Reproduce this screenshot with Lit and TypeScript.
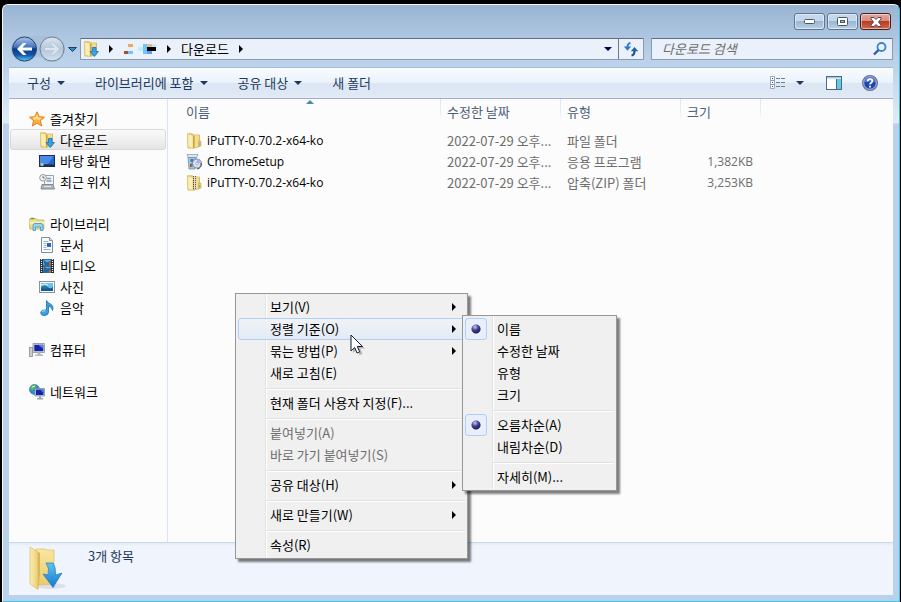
import { LitElement, html, css, svg, nothing, TemplateResult } from "lit";
import { customElement, property } from "lit/decorators.js";
import { classMap } from "lit/directives/class-map.js";

const folderBody = svg`
  <path d="M1.500 .8h5l1 1.200h6v11.500l-5 1.500H2z" fill="#f0d988" stroke="#cfae4e" stroke-width=".8"/>
  <path d="M1.500 1l5.500 1.500v13L2 14z" fill="#fbeeb4" stroke="#d8bc66" stroke-width=".5"/>
  <path d="M7 2.500v13l1.800-1.300V3z" fill="#c9a548"/>
  <path d="M8.800 2.500H13v10.800l-4.200 1.200z" fill="#f3dd8c"/>`;

const icons: Record<string, TemplateResult> = {
  folder: svg`${folderBody}<path d="M12.500 8h2.500v5l-2.500 1z" fill="#e6c868" stroke="#c9a548" stroke-width=".5"/><path d="M13.700 10v2.500" stroke="#58b4d8"/>`,
  download: svg`${folderBody}
    <path d="M9.500 6.500h3.500v4h2.500l-4.200 5-4.300-5h2.500z" fill="#38a4e6" stroke="#1670b8" stroke-width=".8"/>`,
  zip: svg`${folderBody}<path d="M12.500 8h2.500v5l-2.500 1z" fill="#e6c868" stroke="#c9a548" stroke-width=".5"/><path d="M13.700 10v2.500" stroke="#58b4d8"/><path d="M8.500 1v13" stroke="#555" stroke-width="3" stroke-dasharray="1 1"/><path d="M8.500 1v13" stroke="#ddd" stroke-width="1"/>`,
  star: svg`<path d="M8 .8l2.200 4.900 5.200.5-4 3.500 1.300 5.300L8 12.200 3.300 15l1.300-5.300-4-3.500 5.200-.5z" fill="#ffb13c" stroke="#e2701a" stroke-width=".9"/><path d="M8 3l1.400 3.500 3.300.4L10 9l-2-1-4 1 1-2.300-1.700-.2 3.200-.4z" fill="#ffe38a"/>`,
  desktop: svg`<rect x=".5" y="2.500" width="15" height="11" fill="#2a63c8" stroke="#1c2f58"/><path d="M1 3h14L9 11H1z" fill="#4b8ae6"/><path d="M1 11.500h14v1.500H1z" fill="#1d2b48"/><circle cx="3" cy="11.500" r="1.800" fill="#5fd0e8"/><path d="M3 10v3M1.500 11.500h3" stroke="#f3c23c" stroke-width=".6"/>`,
  recent: svg`<path d="M5.500 1.500h9v9h-9z" fill="#f2f4f6" stroke="#9aa2aa"/><path d="M8 4.500h4M7.500 7h5" stroke="#7aa0bc" stroke-width="1.500"/><path d="M3 10.500h11l1.500 4.500H2z" fill="#aeb4ba" stroke="#858b92"/><path d="M5 12.500h7" stroke="#e6e8ea"/><circle cx="4" cy="3.800" r="3.300" fill="#f3f6f8" stroke="#8f989f"/><path d="M4 2v2h1.700" fill="none" stroke="#666"/>`,
  library: svg`<path d="M.8 2.500h6l1 1.500h7v9H.8z" fill="#f1dc8a" stroke="#cdaa48" stroke-width=".8"/><path d="M2 2.500h3" stroke="#3fae4a" stroke-width="1.500"/><path d="M1 5.500h14v3H1z" fill="#f9edb8"/><path d="M4 14.500v-5q0-2 2-2h6q2 0 2 2v5h-2.500v-3.500h-5v3.500z" fill="#8fd6f0" stroke="#3d93bf" stroke-width=".8"/>`,
  doc: svg`<path d="M2.500.5h8l3 3v12h-11z" fill="#fff" stroke="#7f8ea0"/><path d="M10.500.5v3h3" fill="#dce4ec" stroke="#7f8ea0"/><path d="M4.500 4.500h5M4.500 6.500h3M4.500 8.500h3M4.500 10.500h3M4.500 12.500h7" stroke="#94b4d8"/><rect x="8" y="6" width="4" height="4" fill="#2e66b4"/>`,
  video: svg`<rect x="1" y="1" width="14" height="14" fill="#252f3a"/><path d="M2.500 1v14M13.500 1v14" stroke="#eef" stroke-width="1.200" stroke-dasharray="1 1"/><path d="M4 1.500h8v6H4zM4 8.500h8v6H4z" fill="#5aaee0"/><path d="M4 1.500l4 3 4-2v3L9 7.500H6zM5 8.500l3 2 4-1v3l-3 2H4z" fill="#2b6598"/><path d="M10 4h2v3.500h-2zM10 12h2v2.500h-2z" fill="#b8643c"/>`,
  picture: svg`<rect x=".5" y="2.500" width="15" height="11" fill="#fff" stroke="#8a949e"/><path d="M2 4h12v8H2z" fill="#6ec0ee"/><path d="M2 8q4-3 7 0t5-1v5H2z" fill="#247c94"/><path d="M2 9.500h12V12H2z" fill="#145a9a"/><path d="M2 6q4-2 7 0" fill="none" stroke="#e8f7ff"/>`,
  music: svg`<path d="M7.500 .5q1.500 2.500 4 3.500 3.500 2 2 6.500-.5-3.500-4-4.500v6q0 3-3.500 3.500-4.500.3-4.200-3.200.7-2.800 5.700-2.300z" fill="#3da0de" stroke="#1d6fae" stroke-width=".8"/><path d="M3 12q1-1.500 3.500-1.300" stroke="#b7e2fa" fill="none"/>`,
  computer: svg`<rect x=".5" y="5.500" width="3" height="9" fill="#c9ced3" stroke="#868d94" stroke-width=".8"/><path d="M4 1.500h11.500v9H4z" fill="#d6dade" stroke="#8b9299" stroke-width=".8"/><path d="M5.300 2.800h9v6.400h-9z" fill="#1622a8"/><path d="M9 2.800h5.300v4z" fill="#5d83ea"/><path d="M8.500 10.500h3v2h2.500v1.500H6v-1.500h2.500z" fill="#b3b9bf"/>`,
  network: svg`<circle cx="5.500" cy="5.500" r="5" fill="#2c8ed6" stroke="#226a9e" stroke-width=".6"/><path d="M2 2.500Q5 0 7 1.500L6 4 3.500 6 1 5zM6 7l3-1 1 2-3 2z" fill="#5fc549"/><path d="M3 3l3-1" stroke="#e6fbe0"/><path d="M6 4.500h9.500v7.500H6z" fill="#cdd3da" stroke="#7b838c" stroke-width=".7"/><path d="M7 5.500h7.500V11H7z" fill="#1424ac"/><path d="M11 5.500h3.500v3.500z" fill="#5078e2"/><path d="M10 12h2v2h2v1.500H8V14h2z" fill="#9aa3ac"/>`,
  setup: svg`<path d="M1 .5h11l-1.500 3H2z" fill="#dfe6ec" stroke="#93a0ab" stroke-width=".8"/><path d="M2 3.500h8l-1 11.500H3z" fill="#9cc6e2" stroke="#6f93ac" stroke-width=".8"/><path d="M4.500 5h3v3h-3z" fill="#2f7fd0"/><path d="M5 9h3v3.500H5z" fill="#4caf3f"/><path d="M4 10h1.500v3H4z" fill="#c8382e"/><circle cx="11" cy="9.500" r="4.500" fill="#dcdff2" stroke="#7d82a0"/><path d="M11 9.500V5.500q3 0 4 3z" fill="#a8b0ea"/><circle cx="11" cy="9.500" r="1.300" fill="#fff" stroke="#7d82a0" stroke-width=".6"/><path d="M11 15q5-1 4-6" stroke="#44485a" fill="none"/>`,
  views: svg`<path d="M.5 1.500h4v4h-4zM.5 5.500h4v4h-4zM.5 9.500h4v4h-4z" fill="#fff" stroke="#8296b0" stroke-width=".8"/><path d="M2 3h1v1H2zM2 11h1v1H2z" fill="#345"/><path d="M2 7h1v1H2z" fill="#d22"/><path d="M6 3.500h4M11 3.500h4M6 7.500h4M11 7.500h4M6 11.500h4M11 11.500h4" stroke="#6a7f9a"/>`,
  pane: svg`<rect x=".5" y="1.500" width="15" height="13" fill="#fff" stroke="#4a6a88"/><path d="M1 2h14v1.500H1z" fill="#a9c8de"/><path d="M10.500 4v10.500" stroke="#4a6a88"/><path d="M11 4h4v10h-4z" fill="#63cbe0"/>`,
  help: svg`<circle cx="8" cy="8" r="7.400" fill="#1f45b0" stroke="#6c7690" stroke-width="1.200"/><circle cx="8" cy="8" r="6.300" fill="none" stroke="#dce6fa" stroke-width=".8"/><path d="M3 7a5 4.500 0 0 1 10 0q-5-1-10 0z" fill="#6688dc"/><path d="M5.700 6.300q0-2.300 2.300-2.300t2.300 2q0 1.200-1.300 1.900-1 .6-1 1.600" fill="none" stroke="#fff" stroke-width="1.700"/><path d="M7.100 10.800h1.800v1.700H7.100z" fill="#fff"/>`,
  search: svg`<circle cx="9.500" cy="6" r="4" fill="#e8f4fd" stroke="#3a85c8" stroke-width="1.800"/><path d="M6.500 9L2 13.500" stroke="#2a5fae" stroke-width="2.400"/>`,
  refresh: svg`<path d="M7.500 2q-3 .5-3 4.500" fill="none" stroke="#3a86cc" stroke-width="2.200"/><path d="M.8 5.500h7.400L4.500 9.800z" fill="#2f7cc6"/><path d="M8.500 14.500q3-.5 3-4.500" fill="none" stroke="#1f5596" stroke-width="2.200"/><path d="M7.800 10.300h7.400l-3.700-4.300z" fill="#24619f"/>`,
};

const icon = (name: string) =>
  html`<svg class="icon" viewBox="0 0 16 16" aria-hidden="true">${icons[name]}</svg>`;
const caret = html`<svg class="caret" viewBox="0 0 8 4" aria-hidden="true"><path d="M0 0h8L4 4z" fill="currentColor"/></svg>`;
const chevron = html`<svg class="chevron" viewBox="0 0 4 8" aria-hidden="true"><path d="M0 0v8l4-4z" fill="currentColor"/></svg>`;

const shared = css`
  * { box-sizing: border-box; }
  :host {
    box-sizing: border-box;
    font: 13px/20px "Noto Sans CJK KR", sans-serif;
  }
  button, input {
    font: inherit;
    color: inherit;
    margin: 0;
    padding: 0;
    border: 0;
    background: none;
  }
  svg { display: block; flex: none; }
  .icon { width: 16px; height: 16px; }
  .caret { width: 8px; height: 4px; }
  .chevron { width: 4px; height: 8px; }
`;

interface Entry {
  label?: string;
  disabled?: boolean;
  active?: boolean;
  arrow?: boolean;
  group?: string;
  checked?: boolean;
  children?: Entry[];
}

@customElement("popup-menu")
export class PopupMenu extends LitElement {
  @property({ attribute: false }) entries: Entry[] = [];

  static styles = [
    shared,
    css`
      :host {
        display: block;
        padding: 2px;
        border: 1px solid #979797;
        color: #000;
        background: linear-gradient(90deg, #f0f0f0 29px, #e2e3e3 29px 30px, #fff 30px 31px, #f0f0f0 31px) padding-box;
        box-shadow: 3px 3px 2px rgba(0, 0, 0, 0.5);
      }
      .row { position: relative; }
      .item {
        display: flex;
        align-items: center;
        width: 100%;
        height: 22px;
        padding: 0 8px 0 31px;
        border: 1px solid transparent;
        border-radius: 3px;
        text-align: left;
        white-space: nowrap;
      }
      .item span { flex: 1; }
      .item.active {
        border-color: #aecff7;
        background: linear-gradient(rgba(240, 244, 250, 0.8), rgba(224, 233, 245, 0.8));
      }
      .item:disabled { color: #6d6d6d; }
      .option { padding: 0 8px 0 0; border: 0; gap: 10px; }
      .radio {
        appearance: none;
        width: 22px;
        height: 22px;
        border-radius: 3px;
      }
      .radio:checked {
        border: 1px solid #aecff7;
        background:
          radial-gradient(circle at 10px 10px, transparent 4px, #e9eff8 5px),
          radial-gradient(circle at 9px 8px, #d0d0f4 0, #4a4a9c 3px, #1c1c60 6px);
      }
      .separator {
        height: 2px;
        margin: 4px 0 2px 28px;
        border: 0;
        border-top: 1px solid #e0e0e0;
        background: #fff;
      }
      .submenu {
        position: absolute;
        top: -3px;
        left: calc(100% - 3px);
        width: 155px;
      }
    `,
  ];

  private entry(e: Entry) {
    if (!e.label) return html`<hr class="separator" />`;
    if (e.group)
      return html`<label class="item option">
        <input class="radio" type="radio" name=${e.group} .checked=${!!e.checked} />
        <span>${e.label}</span>
      </label>`;
    return html`<div class="row">
      <button type="button" class=${classMap({ item: true, active: !!e.active })} ?disabled=${e.disabled}>
        <span>${e.label}</span>${e.arrow ? chevron : nothing}
      </button>
      ${e.children ? html`<popup-menu class="submenu" .entries=${e.children}></popup-menu>` : nothing}
    </div>`;
  }

  render() {
    return this.entries.map((e) => this.entry(e));
  }
}

const sortEntries: Entry[] = [
  { label: "이름", group: "field", checked: true },
  { label: "수정한 날짜", group: "field" },
  { label: "유형", group: "field" },
  { label: "크기", group: "field" },
  {},
  { label: "오름차순(A)", group: "order", checked: true },
  { label: "내림차순(D)", group: "order" },
  {},
  { label: "자세히(M)..." },
];

const menuEntries: Entry[] = [
  { label: "보기(V)", arrow: true },
  { label: "정렬 기준(O)", arrow: true, active: true, children: sortEntries },
  { label: "묶는 방법(P)", arrow: true },
  { label: "새로 고침(E)" },
  {},
  { label: "현재 폴더 사용자 지정(F)..." },
  {},
  { label: "붙여넣기(A)", disabled: true },
  { label: "바로 가기 붙여넣기(S)", disabled: true },
  {},
  { label: "공유 대상(H)", arrow: true },
  {},
  { label: "새로 만들기(W)", arrow: true },
  {},
  { label: "속성(R)" },
];

interface Place {
  name: string;
  icon: string;
  selected?: boolean;
}

const places: (Place & { items: Place[] })[] = [
  { name: "즐겨찾기", icon: "star", items: [
    { name: "다운로드", icon: "download", selected: true },
    { name: "바탕 화면", icon: "desktop" },
    { name: "최근 위치", icon: "recent" },
  ] },
  { name: "라이브러리", icon: "library", items: [
    { name: "문서", icon: "doc" },
    { name: "비디오", icon: "video" },
    { name: "사진", icon: "picture" },
    { name: "음악", icon: "music" },
  ] },
  { name: "컴퓨터", icon: "computer", items: [] },
  { name: "네트워크", icon: "network", items: [] },
];

const files = [
  { name: "iPuTTY-0.70.2-x64-ko", icon: "folder", type: "파일 폴더", size: "" },
  { name: "ChromeSetup", icon: "setup", type: "응용 프로그램", size: "1,382KB" },
  { name: "iPuTTY-0.70.2-x64-ko", icon: "zip", type: "압축(ZIP) 폴더", size: "3,253KB" },
];

@customElement("app-root")
export class AppRoot extends LitElement {
  static styles = [
    shared,
    css`
      :host {
        display: flex;
        position: relative;
        min-height: 100vh;
        padding: 4px 1px 0 2px;
        background: #000;
        overflow: hidden;
      }
      .window {
        flex: 1;
        display: flex;
        flex-direction: column;
        min-width: 0;
        padding: 0 6px 6px;
        border: 1px solid #f4f9fd;
        border-right-color: #3cc4de;
        border-bottom-color: #3cc4de;
        border-radius: 6px 6px 0 0;
        background: linear-gradient(#98b4d2, #a6bfdb 20px, #b9d0e9 52px, #bcd3eb 62px, #e0ebf7 118px, #b9d1ea 119px);
      }
      .caption {
        display: flex;
        justify-content: flex-end;
        gap: 2px;
        padding: 8px 2px 8px 0;
      }
      .cap {
        display: grid;
        place-items: center;
        width: 31px;
        height: 17px;
        border: 1px solid #5d7590;
        border-radius: 3px;
        box-shadow: inset 0 0 0 1px rgba(255, 255, 255, 0.5);
        background: linear-gradient(#c5d7ea 50%, #9db7d3 50%, #b8d0e8);
      }
      .cap.close {
        border-color: #4e1820;
        background: linear-gradient(#e2a79c 0, #d68a7c 50%, #b83a22 50%, #cf6a4c);
      }
      .navbar {
        display: flex;
        align-items: center;
        height: 22px;
        margin-bottom: 7px;
      }
      .travel { display: flex; align-items: center; margin: -3px 2px -3px 0; }
      .travel .arrows { width: 57px; height: 28px; }
      .recent { width: 12px; display: grid; place-items: center; }
      .address, .searchbox {
        display: flex;
        align-items: center;
        height: 22px;
        min-width: 0;
        border: 1px solid #8b9cad;
        border-top-color: #5f6e7d;
        border-radius: 1px;
        background: #eaf1fa;
        color: #000;
      }
      .address { flex: 1; margin-right: 7px; }
      .crumbs { flex: 1; display: flex; align-items: center; gap: 10px; padding-left: 2px; }
      .crumbs a { color: inherit; text-decoration: none; }
      .redacted { width: 34px; height: 12px; }
      .drop { width: 20px; height: 20px; display: grid; place-items: center; color: #00004e; }
      .reload {
        width: 25px;
        height: 20px;
        border-left: 1px solid #6d7b8a;
        display: grid;
        place-items: center;
      }
      .searchbox { width: 242px; padding: 0 4px 0 10px; }
      .searchbox input { flex: 1; min-width: 0; height: 20px; outline: 0; }
      .searchbox input::placeholder { color: #6d6d6d; font-style: italic; opacity: 1; }
      .toolbar {
        display: flex;
        align-items: center;
        height: 32px;
        padding: 0 15px 0 3px;
        border-top: 1px solid #a3bdd8;
        border-bottom: 1px solid #a0afc6;
        background: linear-gradient(#fafdff, #e8f1fb 50%, #dce6f4 50%, #dfe8f5 90%, #e6edf8);
        color: #1e395b;
      }
      .tool { display: flex; align-items: center; gap: 6px; padding: 0 15px; white-space: nowrap; }
      .tools { display: flex; align-items: center; gap: 20px; margin-left: auto; }
      .tools .tool { padding: 0; gap: 10px; }
      .tools .tool:first-child { margin-right: 2px; }
      .body { flex: 1; display: flex; background: #fcfcfc; min-height: 0; }
      .sidebar { width: 159px; padding: 9px 1px 0; border-right: 1px solid #d6e5f5; }
      .group { margin: 0 0 21px; padding: 0; list-style: none; }
      .place {
        display: flex;
        align-items: center;
        gap: 5px;
        height: 21px;
        padding-left: 18px;
        border: 1px solid transparent;
        border-radius: 3px;
        color: #000;
        text-decoration: none;
      }
      .place.child { padding-left: 28px; }
      .place.selected { border-color: #d9d9d9; background: linear-gradient(#fafafa, #e5e5e5); }
      .main { flex: 1; min-width: 0; }
      .files { table-layout: fixed; width: 593px; border-collapse: collapse; color: #6d6d6d; }
      .files th, .files td {
        padding: 0 7px 0 6px;
        font-weight: 400;
        text-align: left;
        white-space: nowrap;
        overflow: hidden;
      }
      .files th {
        position: relative;
        height: 26px;
        color: #4c607a;
        background: linear-gradient(#d6e5f5, #e3edf8 12px, #fcfcfc 22px) right top / 1px 22px no-repeat;
      }
      .files td { height: 21px; }
      .files th:first-child, .files td:first-child { padding-left: 18px; }
      .files .spacer td { height: 5px; }
      .sort { position: absolute; left: 138px; top: 1px; width: 8px; height: 4px; color: #4a8aae; }
      .files .size { text-align: right; padding-right: 8px; }
      .latin { font: 12px/20px "Open Sans", "Noto Sans CJK KR", sans-serif; }
      .file { display: flex; align-items: center; gap: 5px; color: #000; }
      .c-name { width: 273px; }
      .c-wide { width: 120px; }
      .c-size { width: 80px; }
      .details {
        display: flex;
        gap: 21px;
        height: 53px;
        padding: 3px 18px 0;
        border-top: 1px solid #c9d8ea;
        background: linear-gradient(#e2eaf5, #f0f4fc 3px);
        color: #1e395b;
      }
      .details p { margin: 0; }
      .big { width: 40px; height: 46px; }
      .context { position: absolute; left: 235px; top: 293px; width: 233px; }
      .cursor { position: absolute; left: 350px; top: 334px; width: 16px; height: 22px; }
    `,
  ];

  private travel() {
    return html`<svg class="arrows" viewBox="0 0 57 28" aria-hidden="true">
      <defs>
        <linearGradient id="b" x2="0" y2="1">
          <stop offset="0" stop-color="#a9c6ea" /><stop offset=".42" stop-color="#4674bc" />
          <stop offset=".5" stop-color="#0c3a8c" /><stop offset=".75" stop-color="#1254aa" /><stop offset="1" stop-color="#5cd0fa" />
        </linearGradient>
        <linearGradient id="f" x2="0" y2="1">
          <stop offset="0" stop-color="#dce6f0" /><stop offset=".5" stop-color="#b4c6da" /><stop offset="1" stop-color="#d4e2f0" />
        </linearGradient>
      </defs>
      <path d="M15 1h28a13 13 0 0 1 0 26q-7 0-10-4-4-3-8 0-3 4-10 4a13 13 0 0 1 0-26z" fill="#a5bdd6" opacity=".8" />
      <circle cx="15.500" cy="14" r="12" fill="url(#b)" stroke="#25456e" />
      <circle cx="43" cy="14" r="12" fill="url(#f)" stroke="#6f8296" />
      <path d="M8 14l6-6h3.500l-4 4.500H23v3h-9.500l4 4.500H14z" fill="#fff" />
      <path d="M50.500 14l-6-6H41l4 4.500h-9.500v3H45L41 20h3.500z" fill="#dde7f1" stroke="#b4c3d2" stroke-width=".7" />
    </svg>`;
  }

  render() {
    return html`
      <div class="window">
        <header class="caption">
          <button class="cap" aria-label="최소화">
            <svg width="11" height="5" viewBox="0 0 11 5"><rect x=".5" y=".5" width="10" height="4" rx="1" fill="#fff" stroke="#4a5664" /></svg>
          </button>
          <button class="cap" aria-label="최대화">
            <svg width="11" height="9" viewBox="0 0 11 9"><rect x=".5" y=".5" width="10" height="8" rx="1" fill="#fff" stroke="#4a5664" /><rect x="3.500" y="3.500" width="4" height="2" fill="#9db7d3" stroke="#4a5664" /></svg>
          </button>
          <button class="cap close" aria-label="닫기">
            <svg width="12" height="10" viewBox="0 0 12 10"><path d="M1 .5h3l2 2 2-2h3v1.500L8.500 5 11 8v1.500H8l-2-2-2 2H1V8l2.500-3L1 2z" fill="#fff" stroke="#553840" stroke-width=".9" /></svg>
          </button>
        </header>

        <nav class="navbar">
          <div class="travel">
            <button aria-label="뒤로 및 앞으로">${this.travel()}</button>
            <button class="recent" aria-label="최근 페이지">
              <svg width="9" height="5" viewBox="0 0 9 5"><path d="M.5.5h8l-4 4z" fill="#2f8fc4" stroke="#173f72" /></svg>
            </button>
          </div>
          <div class="address">
            <div class="crumbs">
              ${icon("download")}${chevron}
              <svg class="redacted" viewBox="0 0 34 12" aria-hidden="true" shape-rendering="crispEdges">
                <path d="M5 1h5v3H5z" fill="#f0a860" /><path d="M1 8h4v3H1z" fill="#a0522d" /><path d="M5 8h5v3H5zM20 1h4v10h-4z" fill="#74c4f8" />
                <path d="M24 1h5v3h-5z" fill="#e2c080" /><path d="M29 1h4v3h-4zM15 4h5v4h-5z" fill="#bdeefa" /><path d="M24 4h9v4h-9z" fill="#000" /><path d="M24 8h5v3h-5z" fill="#5aa0fa" />
              </svg>
              ${chevron}<a href="#downloads">다운로드</a>${chevron}
            </div>
            <button class="drop" aria-label="이전 위치">${caret}</button>
            <button class="reload" aria-label="새로 고침">${icon("refresh")}</button>
          </div>
          <label class="searchbox">
            <input type="search" placeholder="다운로드 검색" aria-label="다운로드 검색" />
            ${icon("search")}
          </label>
        </nav>

        <div class="toolbar">
          <button class="tool">구성 ${caret}</button>
          <button class="tool">라이브러리에 포함 ${caret}</button>
          <button class="tool">공유 대상 ${caret}</button>
          <button class="tool">새 폴더</button>
          <div class="tools">
            <button class="tool" aria-label="보기 변경">${icon("views")}${caret}</button>
            <button class="tool" aria-label="미리 보기 창">${icon("pane")}</button>
            <button class="tool" aria-label="도움말">${icon("help")}</button>
          </div>
        </div>

        <div class="body">
          <nav class="sidebar">
            ${places.map(
              (g) => html`<ul class="group">
                <li><a class="place" href="#${g.icon}">${icon(g.icon)}${g.name}</a></li>
                ${g.items.map(
                  (p) => html`<li>
                    <a class=${classMap({ place: true, child: true, selected: !!p.selected })} href="#${p.icon}">${icon(p.icon)}${p.name}</a>
                  </li>`
                )}
              </ul>`
            )}
          </nav>
          <main class="main">
            <table class="files">
              <colgroup><col class="c-name" /><col class="c-wide" /><col class="c-wide" /><col class="c-size" /></colgroup>
              <thead>
                <tr>
                  <th>이름<svg class="sort" viewBox="0 0 8 4"><path d="M0 4h8L4 0z" fill="currentColor" /></svg></th>
                  <th>수정한 날짜</th><th>유형</th><th>크기</th>
                </tr>
              </thead>
              <tbody>
                <tr class="spacer"><td colspan="4"></td></tr>
                ${files.map(
                  (f) => html`<tr>
                    <td><div class="file latin">${icon(f.icon)}${f.name}</div></td>
                    <td>2022-07-29 오후...</td>
                    <td>${f.type}</td>
                    <td class="size latin">${f.size}</td>
                  </tr>`
                )}
              </tbody>
            </table>
          </main>
        </div>

        <footer class="details">
          <svg class="big" viewBox="0 0 40 46" aria-hidden="true">
            <defs>
              <linearGradient id="g1"><stop offset="0" stop-color="#fbeeb0" /><stop offset="1" stop-color="#ecce74" /></linearGradient>
              <linearGradient id="g2" x2="0" y2="1"><stop offset="0" stop-color="#5cc4f4" /><stop offset="1" stop-color="#1278d0" /></linearGradient>
              <linearGradient id="g3" x2="0" y2="1"><stop offset="0" stop-color="#f8e6a0" /><stop offset="1" stop-color="#eccb6c" /></linearGradient>
            </defs>
            <ellipse cx="24" cy="40" rx="15" ry="3" fill="#000" opacity=".08" />
            <path d="M9 3h10l1 1h7v34l-16 1z" fill="url(#g3)" stroke="#d8b65c" stroke-width=".6" />
            <path d="M3 1l8 5v37.500L3 38z" fill="url(#g1)" stroke="#d8b65c" stroke-width=".6" />
            <path d="M11 6l2 1v21l-2 15.500z" fill="#d9b65a" />
            <path d="M19 17h7q3 4 2.500 12l6.500-2L26 41.500 16 28l5 1q2-7-2-12z" fill="url(#g2)" stroke="#2478bc" stroke-width=".7" />
          </svg>
          <p>3개 항목</p>
        </footer>
      </div>

      <popup-menu class="context" .entries=${menuEntries}></popup-menu>
      <svg class="cursor" viewBox="0 0 16 22" aria-hidden="true">
        <path d="M3 3v16l4-3.500 2.500 5.500 3-1-2.500-5.500h5z" fill="#000" opacity=".25" />
        <path d="M1 1v16l3.700-3.500L7 19l2.700-1.200-2.400-5.300h5.200z" fill="#fff" stroke="#1a1a2e" />
      </svg>
    `;
  }
}
